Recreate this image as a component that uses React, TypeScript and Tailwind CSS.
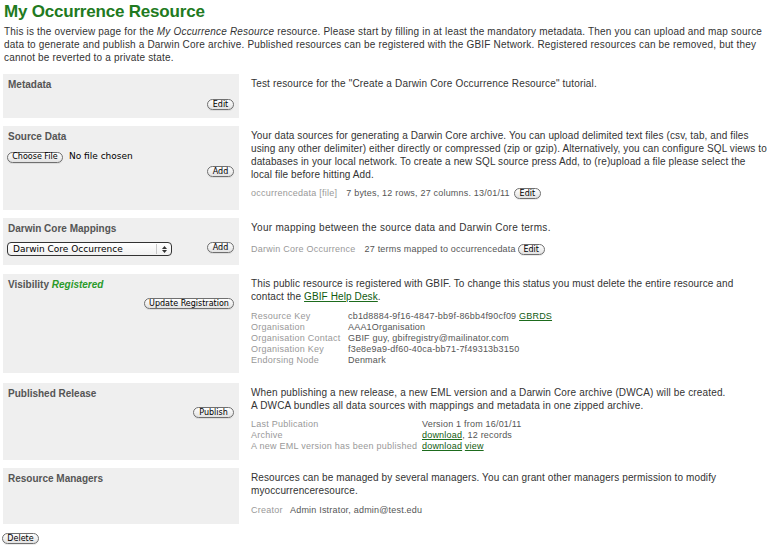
import React from "react";

const btnCls =
  "inline-flex items-center justify-center h-[11px] rounded-full border border-[#6f6f6f] bg-gradient-to-b from-white to-[#e2e2e2] text-[8px] leading-none text-black font-['DejaVu_Sans',sans-serif] shadow-[0_1px_0_rgba(0,0,0,0.08)]";

function Btn({ label, w }: { label: string; w: string }) {
  return <span className={`${btnCls} ${w}`}>{label}</span>;
}

function Link({ children }: { children: React.ReactNode }) {
  return <span className="text-[#0f5a0f] underline decoration-[#1d6b1d]">{children}</span>;
}

function Header({ children }: { children: React.ReactNode }) {
  return <div className="pl-[5px] pt-[4px] text-[10px] leading-[13px] font-bold text-[#555]">{children}</div>;
}

const para = "ml-[12px] pt-[3px] text-[10px] leading-[13px] whitespace-nowrap tracking-[0.11px]";
const lbl = "text-[#999] tracking-[0.25px]";
const val = "text-[#555] tracking-[0.2px]";

export default function App() {
  return (
    <div className="w-[776px] h-[548px] bg-white overflow-hidden font-['Liberation_Sans',Arial,sans-serif] text-[#333]">
      <h1 className="pl-[4px] pt-[2px] text-[17px] leading-[20px] font-bold tracking-[-0.2px] text-[#217a21]">My Occurrence Resource</h1>
      <p className="pl-[4px] mt-[3px] text-[10px] leading-[13px] whitespace-nowrap tracking-[0.18px]">
        This is the overview page for the <i>My Occurrence Resource</i> resource. Please start by filling in at least the mandatory metadata. Then you can upload and map source
        <br />
        data to generate and publish a Darwin Core archive. Published resources can be registered with the GBIF Network. Registered resources can be removed, but they
        <br />
        cannot be reverted to a private state.
      </p>

      {/* Metadata */}
      <div className="flex mt-[10px]">
        <div className="ml-[3px] w-[236px] h-[44px] bg-[#efefef] flex flex-col">
          <Header>Metadata</Header>
          <div className="flex justify-end pr-[5px] mt-[8px]">
            <Btn label="Edit" w="w-[27px]" />
          </div>
        </div>
        <div className={`${para} tracking-[0.17px]`}>
          Test resource for the "Create a Darwin Core Occurrence Resource" tutorial.
        </div>
      </div>

      {/* Source Data */}
      <div className="flex mt-[8px]">
        <div className="ml-[3px] w-[236px] h-[84px] bg-[#efefef] flex flex-col">
          <Header>Source Data</Header>
          <div className="flex items-center pl-[4px] mt-[9px] h-[10px]">
            <Btn label="Choose File" w="w-[56px]" />
            <span className="ml-[6px] text-[9px] text-black font-['DejaVu_Sans',sans-serif]">No file chosen</span>
          </div>
          <div className="flex justify-end pr-[5px] mt-[4px]">
            <Btn label="Add" w="w-[27px]" />
          </div>
        </div>
        <div className={para}>
          <p>
            Your data sources for generating a Darwin Core archive. You can upload delimited text files (csv, tab, and files
            <br />
            using any other delimiter) either directly or compressed (zip or gzip). Alternatively, you can configure SQL views to
            <br />
            databases in your local network. To create a new SQL source press Add, to (re)upload a file please select the
            <br />
            local file before hitting Add.
          </p>
          <div className="flex items-center h-[13px] mt-[6px] text-[9px] tracking-normal">
            <span className={lbl}>occurrencedata [file]</span>
            <span className={`ml-[9px] ${val}`}>7 bytes, 12 rows, 27 columns. 13/01/11</span>
            <span className="ml-[4px] flex"><Btn label="Edit" w="w-[27px]" /></span>
          </div>
        </div>
      </div>

      {/* Darwin Core Mappings */}
      <div className="flex mt-[8px]">
        <div className="ml-[3px] w-[236px] h-[47px] bg-[#efefef] flex flex-col">
          <Header>Darwin Core Mappings</Header>
          <div className="flex items-start justify-between pl-[4px] pr-[5px] mt-[7px]">
            <div className="relative w-[165px] h-[14px] rounded-[4px] border border-[#333] bg-gradient-to-b from-white to-[#f1f1f1] flex items-center">
              <span className="pl-[5px] text-[9px] leading-none text-black font-['DejaVu_Sans',sans-serif]">Darwin Core Occurrence</span>
              <span className="absolute right-[14px] top-[1px] bottom-[1px] w-px bg-[#c8c8c8]" />
              <svg className="absolute right-[4px] top-[3px]" width="5" height="7" viewBox="0 0 5 7">
                <path d="M2.5 0 L5 3 L0 3 Z" fill="#333" />
                <path d="M0 4 L5 4 L2.5 7 Z" fill="#333" />
              </svg>
            </div>
            <div className="flex">
              <Btn label="Add" w="w-[27px]" />
            </div>
          </div>
        </div>
        <div className={para}>
          <p className="tracking-[0.3px]">Your mapping between the source data and Darwin Core terms.</p>
          <div className="flex items-center h-[13px] mt-[9px] text-[9px] tracking-normal">
            <span className={lbl}>Darwin Core Occurrence</span>
            <span className={`ml-[9px] ${val}`}>27 terms mapped to occurrencedata</span>
            <span className="ml-[2px] flex"><Btn label="Edit" w="w-[27px]" /></span>
          </div>
        </div>
      </div>

      {/* Visibility */}
      <div className="flex mt-[9px]">
        <div className="ml-[3px] w-[236px] h-[99px] bg-[#efefef] flex flex-col">
          <Header>
            Visibility <i className="text-[#2a9a2a]">Registered</i>
          </Header>
          <div className="flex justify-end pr-[5px] mt-[7px]">
            <Btn label="Update Registration" w="w-[90px]" />
          </div>
        </div>
        <div className={para}>
          <p>
            This public resource is registered with GBIF. To change this status you must delete the entire resource and
            <br />
            contact the <Link>GBIF Help Desk</Link>.
          </p>
          <div className="mt-[8px] grid grid-cols-[97px_auto] text-[9px] leading-[11px] tracking-normal">
            <span className={lbl}>Resource Key</span>
            <span className={val}>cb1d8884-9f16-4847-bb9f-86bb4f90cf09 <Link>GBRDS</Link></span>
            <span className={lbl}>Organisation</span>
            <span className={val}>AAA1Organisation</span>
            <span className={lbl}>Organisation Contact</span>
            <span className={val}>GBIF guy, gbifregistry@mailinator.com</span>
            <span className={lbl}>Organisation Key</span>
            <span className={val}>f3e8e9a9-df60-40ca-bb71-7f49313b3150</span>
            <span className={lbl}>Endorsing Node</span>
            <span className={val}>Denmark</span>
          </div>
        </div>
      </div>

      {/* Published Release */}
      <div className="flex mt-[10px]">
        <div className="ml-[3px] w-[236px] h-[77px] bg-[#efefef] flex flex-col">
          <Header>Published Release</Header>
          <div className="flex justify-end pr-[5px] mt-[7px]">
            <Btn label="Publish" w="w-[41px]" />
          </div>
        </div>
        <div className={para}>
          <p className="tracking-[0.15px]">
            When publishing a new release, a new EML version and a Darwin Core archive (DWCA) will be created.
            <br />
            A DWCA bundles all data sources with mappings and metadata in one zipped archive.
          </p>
          <div className="mt-[7px] grid grid-cols-[171px_auto] text-[9px] leading-[11px] tracking-normal">
            <span className={lbl}>Last Publication</span>
            <span className={val}>Version 1 from 16/01/11</span>
            <span className={lbl}>Archive</span>
            <span className={val}><Link>download</Link>, 12 records</span>
            <span className={lbl}>A new EML version has been published</span>
            <span className={val}><Link>download</Link> <Link>view</Link></span>
          </div>
        </div>
      </div>

      {/* Resource Managers */}
      <div className="flex mt-[8px]">
        <div className="ml-[3px] w-[236px] h-[56px] bg-[#efefef] flex flex-col">
          <Header>Resource Managers</Header>
        </div>
        <div className={para}>
          <p>
            Resources can be managed by several managers. You can grant other managers permission to modify
            <br />
            myoccurrenceresource.
          </p>
          <div className="mt-[8px] flex text-[9px] leading-[11px] tracking-normal">
            <span className={`${lbl} w-[39px]`}>Creator</span>
            <span className={val}>Admin Istrator, admin@test.edu</span>
          </div>
        </div>
      </div>

      <div className="flex ml-[2px] mt-[9px]">
        <Btn label="Delete" w="w-[37px]" />
      </div>
    </div>
  );
}
